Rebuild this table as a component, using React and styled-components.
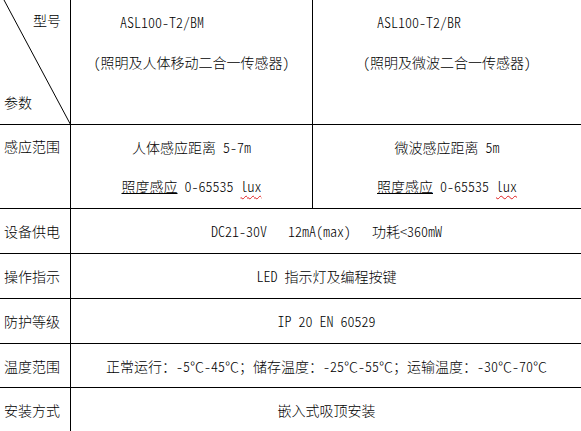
import React from 'react';
import styled, { createGlobalStyle } from 'styled-components';

const Global = createGlobalStyle`
  html, body {
    margin: 0;
    padding: 0;
    background: #fff;
    overflow: hidden;
  }
  body {
    font-family: "Noto Sans CJK SC", "Noto Sans", sans-serif;
    font-size: 14px;
    font-weight: 300;
    line-height: 16px;
    color: #000;
    font-feature-settings: "hwid";
  }
`;

const Sheet = styled.div`
  display: grid;
  width: 581px;
  grid-template-columns: 71px 242px 1fr;
  grid-template-rows: 125px 84px 45px 45px 45px 44px 43px;
`;

const Cell = styled.div`
  box-sizing: border-box;
  border-right: ${p => (p.$right ? '1px solid #000' : 'none')};
  border-bottom: ${p => (p.$last ? 'none' : '1px solid #000')};
  grid-column: ${p => p.$span || 'auto'};
  min-width: 0;
  white-space: pre;
`;

const Corner = styled(Cell)`
  position: relative;
  display: flex;
  flex-direction: column;
  justify-content: space-between;
  padding: 12px 0 14px 4px;
`;

const Slash = styled.svg`
  position: absolute;
  left: 0;
  top: 0;
  width: 71px;
  height: 125px;
  pointer-events: none;
`;

const CornerTop = styled.div`
  align-self: flex-end;
  padding-right: 9px;
`;

const Label = styled(Cell)`
  display: flex;
  align-items: ${p => (p.$top ? 'flex-start' : 'center')};
  padding: ${p => (p.$top ? '13px 0 0 4px' : '0 0 0 4px')};
`;

const Model = styled(Cell)`
  display: flex;
  flex-direction: column;
  align-items: center;
  padding-top: 14px;
  gap: 24px;
`;

const ModelCode = styled.div`
  align-self: flex-start;
  padding-left: ${p => p.$indent}px;
`;

const Range = styled(Cell)`
  display: flex;
  flex-direction: column;
  align-items: center;
  padding-top: 14px;
  gap: 23px;
`;

const Wide = styled(Cell)`
  display: flex;
  align-items: center;
  justify-content: center;
  padding-left: 1px;
`;

const Marked = styled.span`
  text-decoration: underline;
  text-decoration-thickness: 1px;
  text-underline-offset: 1px;
`;

const Spell = styled.span`
  text-decoration: underline wavy #e02020;
  text-decoration-thickness: 1px;
  text-underline-offset: 3px;
`;

const rows = [
  { label: '设备供电', value: 'DC21-30V   12mA(max)   功耗<360mW' },
  { label: '操作指示', value: 'LED 指示灯及编程按键' },
  { label: '防护等级', value: 'IP 20 EN 60529' },
  { label: '温度范围', value: '正常运行：-5℃-45℃；储存温度：-25℃-55℃；运输温度：-30℃-70℃' },
  { label: '安装方式', value: '嵌入式吸顶安装', last: true },
];

export default function App() {
  return (
    <>
      <Global />
      <Sheet>
        <Corner $right>
          <Slash viewBox="0 0 71 125">
            <line x1="4" y1="0" x2="70.5" y2="124.5" stroke="#000" strokeWidth="1" />
          </Slash>
          <CornerTop>型号</CornerTop>
          <div>参数</div>
        </Corner>
        <Model $right>
          <ModelCode $indent={49}>ASL100-T2/BM</ModelCode>
          <div>（照明及人体移动二合一传感器）</div>
        </Model>
        <Model>
          <ModelCode $indent={64}>ASL100-T2/BR</ModelCode>
          <div>（照明及微波二合一传感器）</div>
        </Model>

        <Label $right $top>感应范围</Label>
        <Range $right>
          <div>人体感应距离 5-7m</div>
          <div><Marked>照度感应</Marked> 0-65535 <Spell>lux</Spell></div>
        </Range>
        <Range>
          <div>微波感应距离 5m</div>
          <div><Marked>照度感应</Marked> 0-65535 <Spell>lux</Spell></div>
        </Range>

        {rows.map(r => (
          <React.Fragment key={r.label}>
            <Label $right $last={r.last}>{r.label}</Label>
            <Wide $span="2 / 4" $last={r.last}>{r.value}</Wide>
          </React.Fragment>
        ))}
      </Sheet>
    </>
  );
}
